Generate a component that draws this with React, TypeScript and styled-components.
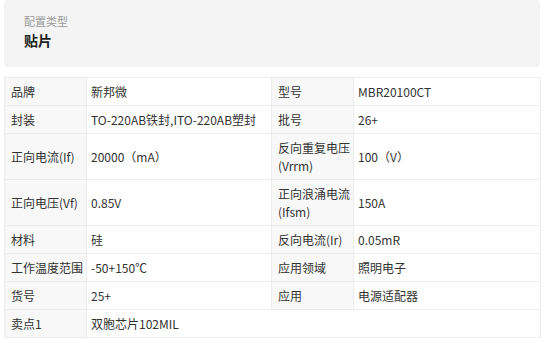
import React from "react";
import styled, { createGlobalStyle } from "styled-components";

const Global = createGlobalStyle`
  html, body { margin: 0; padding: 0; background: #fff; }
  body { font-family: "Noto Sans CJK SC", "Noto Sans CJK JP", sans-serif; color: #333; }
`;

const Page = styled.div`
  width: 536px;
  margin-left: 4px;
  display: flex;
  flex-direction: column;
  gap: 10px;
`;

const TypeBox = styled.div`
  background: #f4f4f4;
  border-radius: 4px;
  padding: 13px 20px 16px;
  display: flex;
  flex-direction: column;
`;

const TypeLabel = styled.div`
  font-size: 11px;
  line-height: 17px;
  color: #9a9a9a;
`;

const TypeValue = styled.div`
  font-size: 14px;
  line-height: 21px;
  font-weight: 700;
  color: #222;
`;

const Table = styled.table`
  width: 536px;
  border-collapse: collapse;
  table-layout: fixed;
  font-size: 12px;
  line-height: 18px;
  color: #333;
`;

const Cell = styled.td<{ $label?: boolean }>`
  border: 1px solid #ececec;
  padding: ${(p) => (p.$label ? "5px 1px 4px 6px" : "5px 5px 4px 4px")};
  vertical-align: middle;
  background: ${(p) => (p.$label ? "#f8f8f8" : "#fff")};
`;

type Row = [string, string, string?, string?];

const rows: Row[] = [
  ["品牌", "新邦微", "型号", "MBR20100CT"],
  ["封装", "TO-220AB铁封,ITO-220AB塑封", "批号", "26+"],
  ["正向电流(If)", "20000（mA）", "反向重复电压(Vrrm)", "100（V）"],
  ["正向电压(Vf)", "0.85V", "正向浪涌电流(Ifsm)", "150A"],
  ["材料", "硅", "反向电流(Ir)", "0.05mR"],
  ["工作温度范围", "-50+150℃", "应用领域", "照明电子"],
  ["货号", "25+", "应用", "电源适配器"],
  ["卖点1", "双胞芯片102MIL"],
];

export default function App() {
  return (
    <>
      <Global />
      <Page>
        <TypeBox>
          <TypeLabel>配置类型</TypeLabel>
          <TypeValue>贴片</TypeValue>
        </TypeBox>
        <Table>
          <colgroup>
            <col style={{ width: 82 }} />
            <col style={{ width: 185 }} />
            <col style={{ width: 82 }} />
            <col style={{ width: 187 }} />
          </colgroup>
          <tbody>
            {rows.map((r, i) => (
              <tr key={i}>
                <Cell $label>{r[0]}</Cell>
                {r[2] !== undefined ? (
                  <>
                    <Cell>{r[1]}</Cell>
                    <Cell $label>{r[2]}</Cell>
                    <Cell>{r[3]}</Cell>
                  </>
                ) : (
                  <Cell colSpan={3}>{r[1]}</Cell>
                )}
              </tr>
            ))}
          </tbody>
        </Table>
      </Page>
    </>
  );
}
